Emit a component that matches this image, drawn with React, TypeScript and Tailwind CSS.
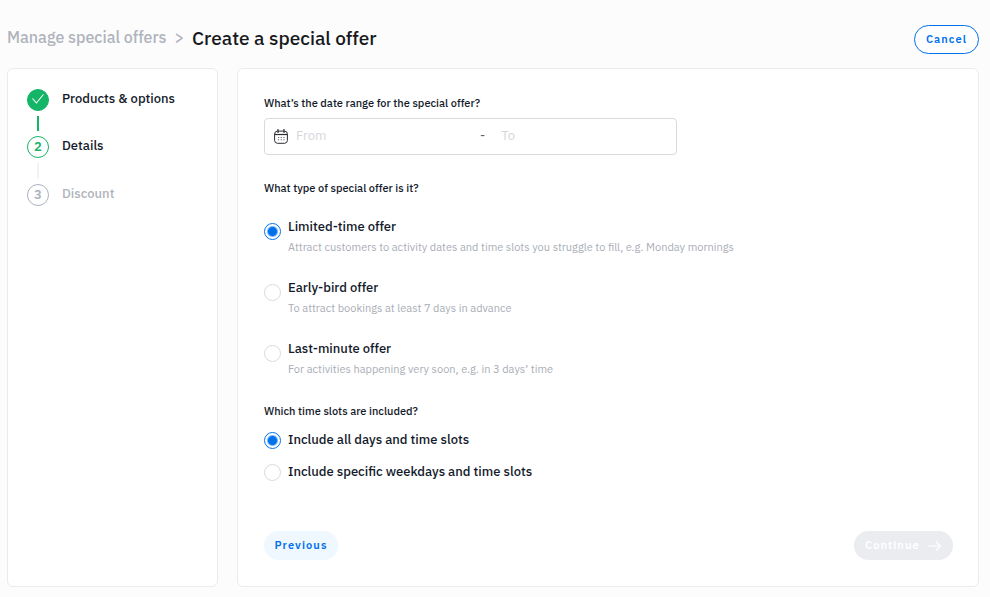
import { useState } from "react";
import type { ReactNode } from "react";

const offerTypes = [
  {
    id: "limited",
    title: "Limited-time offer",
    description:
      "Attract customers to activity dates and time slots you struggle to fill, e.g. Monday mornings",
  },
  {
    id: "early",
    title: "Early-bird offer",
    description: "To attract bookings at least 7 days in advance",
  },
  {
    id: "last",
    title: "Last-minute offer",
    description: "For activities happening very soon, e.g. in 3 days’ time",
  },
];

const slotOptions = [
  { id: "all", title: "Include all days and time slots" },
  { id: "specific", title: "Include specific weekdays and time slots" },
];

const radioClass =
  "m-0 size-[17px] shrink-0 appearance-none rounded-full border border-[#d9dadd] bg-white checked:border-[#0071eb] checked:bg-[radial-gradient(circle,#0071eb_4px,white_6px)]";

function CalendarIcon() {
  return (
    <svg width="14" height="15" viewBox="0 0 14 15" fill="none" stroke="#2b2d33" aria-hidden="true">
      <rect x="0.6" y="2.1" width="12.8" height="12.2" rx="3" strokeWidth="1" />
      <path d="M0.6 5.5h12.8" strokeWidth="1.2" />
      <path d="M4 0.4v3M10 0.4v3" strokeWidth="1.2" strokeLinecap="round" />
      <path d="M4 8.5h6.6M4 10.8h6.6" stroke="#6b6e75" strokeWidth="1.1" strokeDasharray="1.2 1.5" />
    </svg>
  );
}

function Step({ marker, label, tone }: { marker: ReactNode; label: string; tone: "done" | "current" | "todo" }) {
  const circle = {
    done: "border-[#15b568] bg-[#15b568] text-white",
    current: "border-[#15b568] text-[#15b568]",
    todo: "border-[#acb2bf] text-[#acb2bf]",
  }[tone];
  return (
    <div className="flex gap-[13px]">
      <span
        className={`flex size-[22px] shrink-0 items-center justify-center rounded-full border text-[13px] font-semibold ${circle}`}
      >
        {marker}
      </span>
      <span
        className={`text-[13px] leading-5 font-medium ${tone === "todo" ? "text-[#afb3bb]" : "text-[#141a2b]"}`}
      >
        {label}
      </span>
    </div>
  );
}

export default function App() {
  const [offerType, setOfferType] = useState("limited");
  const [slots, setSlots] = useState("all");

  return (
    <div className="flex min-h-screen flex-col bg-[#fcfcfc] pt-[25px] pr-[11px] pb-[10px] pl-[7px] font-['IBM_Plex_Sans','Roboto',sans-serif] text-[#141a2b]">
      <header className="flex items-start justify-between">
        <nav className="flex items-start gap-2 font-medium">
          <a href="#offers" className="text-[16px] leading-6 text-[#afb3bb]">
            Manage special offers
          </a>
          <span className="text-[16px] leading-6 text-[#afb3bb]">&gt;</span>
          <h1 className="text-[19px] leading-[26px] text-[#18191c]">Create a special offer</h1>
        </nav>
        <button
          type="button"
          className="h-[29px] w-[65px] rounded-full border border-[#0071eb] bg-white text-[11px] font-semibold tracking-widest text-[#0071eb]"
        >
          Cancel
        </button>
      </header>

      <div className="mt-[14px] flex flex-1 gap-[19px]">
        <aside className="w-[211px] shrink-0 rounded-md border border-[#ebebec] bg-white px-[19px] py-5">
          <Step
            tone="done"
            label="Products & options"
            marker={
              <svg width="14" height="14" viewBox="0 0 14 14" fill="none" stroke="currentColor" strokeWidth="1.1" aria-hidden="true">
                <path d="M1.5 5.5 5.4 10 12.4 1.5" />
              </svg>
            }
          />
          <div className="my-[5px] ml-[10px] h-[15px] w-[2px] bg-[#15b568]" />
          <Step tone="current" label="Details" marker="2" />
          <div className="my-[5px] ml-[10px] h-4 w-[2px] bg-[#f2f2f3]" />
          <Step tone="todo" label="Discount" marker="3" />
        </aside>

        <form className="flex min-w-0 flex-1 flex-col rounded-md border border-[#ebebec] bg-white pt-[25px] pr-[25px] pb-[26px] pl-[26px]">
          <label htmlFor="from" className="text-[11px] leading-[18px] font-medium">
            What’s the date range for the special offer?
          </label>
          <div className="mt-[6px] flex h-[37px] w-full max-w-[413px] items-center rounded border border-[#d9dadd] px-[9px] text-[13px]">
            <CalendarIcon />
            <input
              id="from"
              placeholder="From"
              className="ml-2 w-[184px] min-w-0 pb-[2px] outline-none placeholder:text-[#d5d7dd]"
            />
            <span className="pb-[2px] text-[#5d6270]">-</span>
            <input
              aria-label="To"
              placeholder="To"
              className="ml-4 min-w-0 flex-1 pb-[2px] outline-none placeholder:text-[#d5d7dd]"
            />
          </div>

          <fieldset className="mt-6">
            <legend className="text-[11px] leading-[18px] font-medium">What type of special offer is it?</legend>
            <div className="mt-5 flex flex-col gap-[21px]">
              {offerTypes.map((option) => (
                <label key={option.id} className="flex gap-[7px] leading-5">
                  <span className="flex pt-[6px]">
                    <input
                      type="radio"
                      name="offerType"
                      checked={offerType === option.id}
                      onChange={() => setOfferType(option.id)}
                      className={radioClass}
                    />
                  </span>
                  <span>
                    <span className="block text-[13px] font-medium">{option.title}</span>
                    <span className="block text-[11px] text-[#a9adb6]">{option.description}</span>
                  </span>
                </label>
              ))}
            </div>
          </fieldset>

          <fieldset className="mt-[23px]">
            <legend className="text-[11px] leading-[18px] font-medium">Which time slots are included?</legend>
            <div className="mt-[10px] flex flex-col gap-3">
              {slotOptions.map((option) => (
                <label key={option.id} className="flex items-center gap-[7px] text-[13px] leading-5 font-medium">
                  <input
                    type="radio"
                    name="slots"
                    checked={slots === option.id}
                    onChange={() => setSlots(option.id)}
                    className={radioClass}
                  />
                  {option.title}
                </label>
              ))}
            </div>
          </fieldset>

          <div className="mt-auto flex justify-between pt-6">
            <button
              type="button"
              className="h-[29px] w-[74px] rounded-full bg-[#f0f8ff] text-[11px] font-semibold tracking-widest text-[#0071eb]"
            >
              Previous
            </button>
            <button
              type="button"
              disabled
              className="flex h-[29px] w-[99px] items-center justify-between rounded-full bg-[#ebecf0] px-[11px] text-[11px] font-semibold tracking-widest text-white"
            >
              Continue
              <svg width="14" height="12" viewBox="0 0 14 12" fill="none" stroke="currentColor" strokeWidth="1.2" aria-hidden="true">
                <path d="M0.5 6h12M8 1.5 12.5 6 8 10.5" />
              </svg>
            </button>
          </div>
        </form>
      </div>
    </div>
  );
}
